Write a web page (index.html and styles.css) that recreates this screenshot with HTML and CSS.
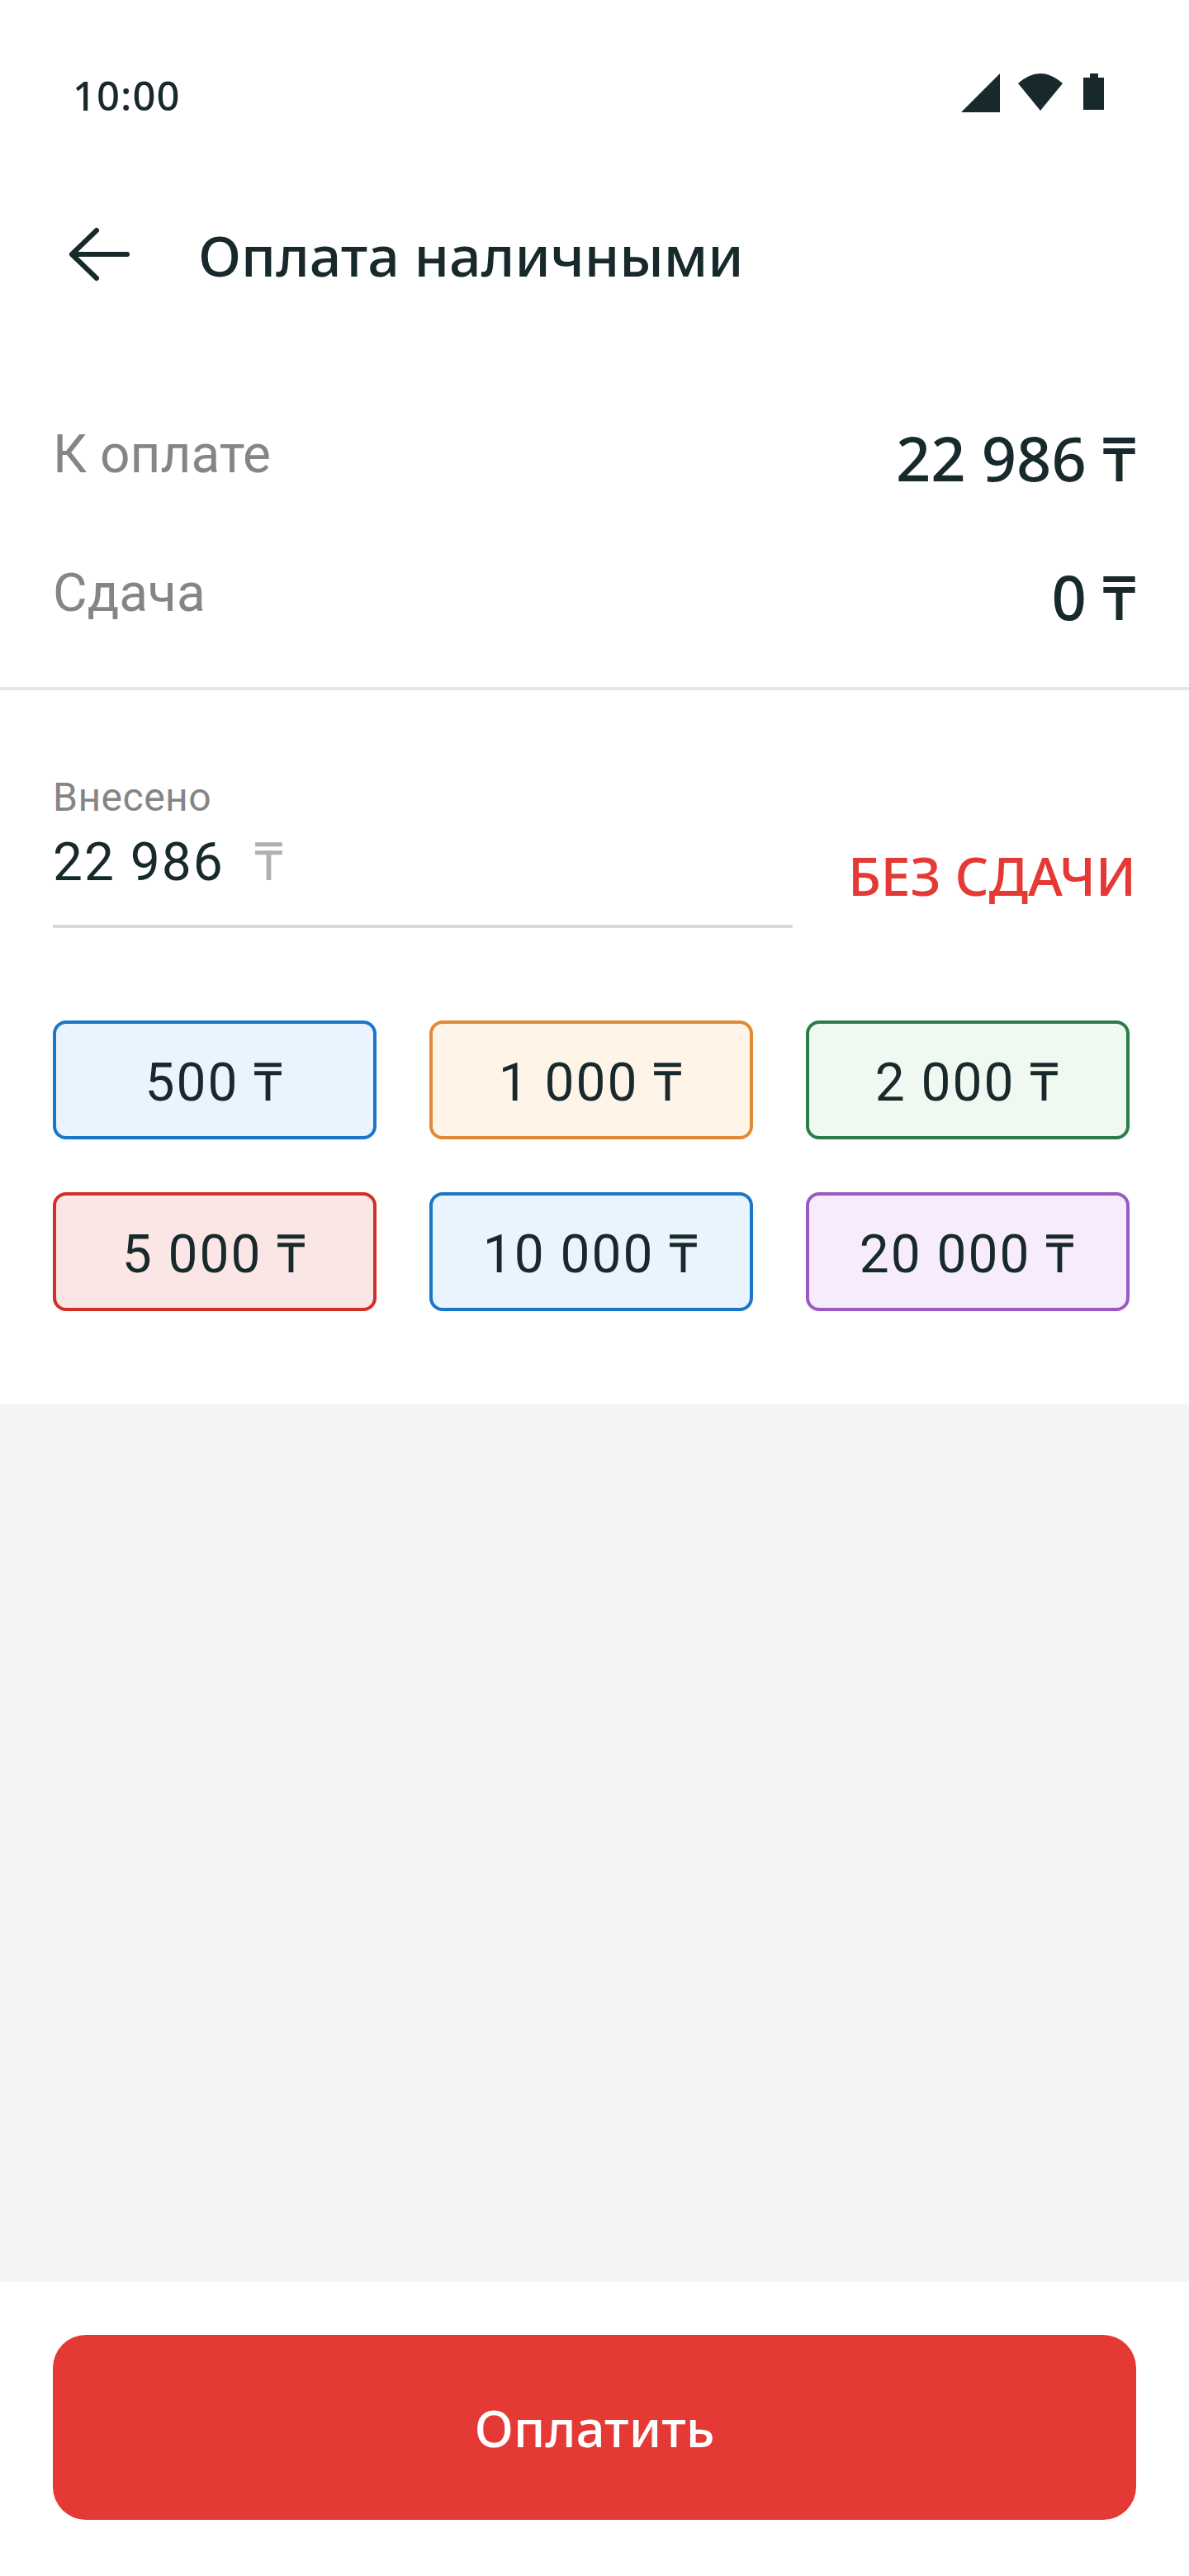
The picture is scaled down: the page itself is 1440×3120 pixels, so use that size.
FILE: index.html
```html
<!DOCTYPE html>
<html lang="ru">

<head>
    <meta charset="UTF-8">
    <meta name="viewport" content="width=device-width, initial-scale=1.0">
    <title>Оплата наличными</title>
    <link rel="stylesheet" href="styles.css">
</head>

<body>
    <div class="screen">
        <div class="statusbar">
            <span class="time">10:00</span>
            <div class="status-icons">
                <svg width="47" height="47" viewBox="0 0 47 47"><path d="M0 47 L47 0 V47 Z"/></svg>
                <svg width="54" height="45" viewBox="0 0 54 45"><path d="M0 12 Q27 -12 54 12 L27 45 Z"/></svg>
                <svg class="icon-battery" width="25" height="44" viewBox="0 0 25 44"><path d="M8 0 H18 V5 H25 V44 H0 V5 H8 Z"/></svg>
            </div>
        </div>

        <div class="toolbar">
            <svg class="icon-back" width="76" height="68" viewBox="0 0 76 68"><path d="M35 5 L5 34 L35 63 M5 34 H72"/></svg>
            <h1 class="title">Оплата наличными</h1>
        </div>

        <div class="summary">
            <div class="summary-row">
                <span class="summary-label">К оплате</span>
                <span class="summary-value">22 986 ₸</span>
            </div>
            <div class="summary-row">
                <span class="summary-label">Сдача</span>
                <span class="summary-value">0 ₸</span>
            </div>
        </div>

        <div class="payment">
            <div class="input-row">
                <div class="field">
                    <div class="field-label">Внесено</div>
                    <div class="field-value">22 986 <span class="field-currency">₸</span></div>
                </div>
                <div class="no-change">БЕЗ СДАЧИ</div>
            </div>

            <div class="amounts">
                <div class="amount blue">500 ₸</div>
                <div class="amount orange">1 000 ₸</div>
                <div class="amount green">2 000 ₸</div>
                <div class="amount red">5 000 ₸</div>
                <div class="amount blue">10 000 ₸</div>
                <div class="amount purple">20 000 ₸</div>
            </div>
        </div>

        <div class="spacer"></div>

        <div class="footer">
            <div class="pay-btn">Оплатить</div>
        </div>
    </div>
</body>

</html>
```

FILE: styles.css
```css
* {
    box-sizing: border-box;
}

body {
    margin: 0;
    background-color: #fff;
    font-family: "Noto Sans", "DejaVu Sans", sans-serif;
    color: #18292b;
}

.screen {
    height: 3120px;
    display: flex;
    flex-direction: column;
}

.statusbar {
    height: 230px;
    padding: 0 103px 0 88px;
    display: flex;
    justify-content: space-between;
    align-items: center;
}

.time {
    font-size: 49px;
    font-weight: 500;
    letter-spacing: 1px;
}

.status-icons {
    display: flex;
    align-items: flex-start;
    gap: 22px;
    margin-bottom: 6px;
}

.status-icons svg {
    display: block;
    fill: #18292b;
}

.icon-battery {
    margin-left: 3px;
}

.toolbar {
    height: 156px;
    display: flex;
    align-items: center;
    padding-left: 82px;
}

.icon-back {
    fill: none;
    stroke: #18292b;
    stroke-width: 6;
    stroke-linecap: round;
    stroke-linejoin: round;
}

.title {
    margin: 0 0 0 82px;
    font-size: 68px;
    font-weight: 500;
}

.summary {
    height: 450px;
    padding: 84px 64px 0;
    border-bottom: 4px solid #e6e6e6;
}

.summary-row {
    display: flex;
    justify-content: space-between;
    align-items: center;
    height: 168px;
}

.summary-label {
    font-family: "Roboto", sans-serif;
    font-size: 64px;
    color: #858585;
    padding-bottom: 8px;
}

.summary-value {
    font-size: 74px;
    font-weight: 500;
}

.payment {
    padding: 96px 64px 112px;
}

.input-row {
    display: flex;
    justify-content: space-between;
    align-items: flex-end;
}

.field {
    width: 896px;
    padding-bottom: 30px;
    border-bottom: 4px solid #d9d9d9;
}

.field-label {
    font-family: "Roboto", sans-serif;
    font-size: 48px;
    line-height: 68px;
    letter-spacing: 0.5px;
    color: #858585;
}

.field-value {
    font-family: "Roboto", sans-serif;
    font-size: 64px;
    line-height: 90px;
    letter-spacing: 2px;
}

.field-currency {
    color: #b0b0b0;
    margin-left: 18px;
}

.no-change {
    font-size: 64px;
    line-height: 80px;
    font-weight: 500;
    color: #e53935;
    margin-bottom: 23px;
}

.amounts {
    display: grid;
    grid-template-columns: repeat(3, 392px);
    grid-auto-rows: 144px;
    gap: 64px;
    margin-top: 112px;
}

.amount {
    border: 4px solid;
    border-radius: 16px;
    display: flex;
    align-items: center;
    justify-content: center;
    font-family: "Roboto", sans-serif;
    font-size: 64px;
    letter-spacing: 2px;
}

.blue {
    background-color: #e9f4fe;
    border-color: #1976c9;
}

.orange {
    background-color: #fff4e8;
    border-color: #e08a35;
}

.green {
    background-color: #eff8f1;
    border-color: #2a7d4a;
}

.red {
    background-color: #fbe6e6;
    border-color: #d32f26;
}

.purple {
    background-color: #f6ecfb;
    border-color: #9b59c4;
}

.spacer {
    flex: 1;
    background-color: #f4f4f4;
}

.footer {
    height: 356px;
    padding: 64px 64px 0;
}

.pay-btn {
    height: 224px;
    border-radius: 40px;
    background-color: #e53935;
    color: #fff;
    font-size: 62px;
    font-weight: 500;
    display: flex;
    align-items: center;
    justify-content: center;
}
```
